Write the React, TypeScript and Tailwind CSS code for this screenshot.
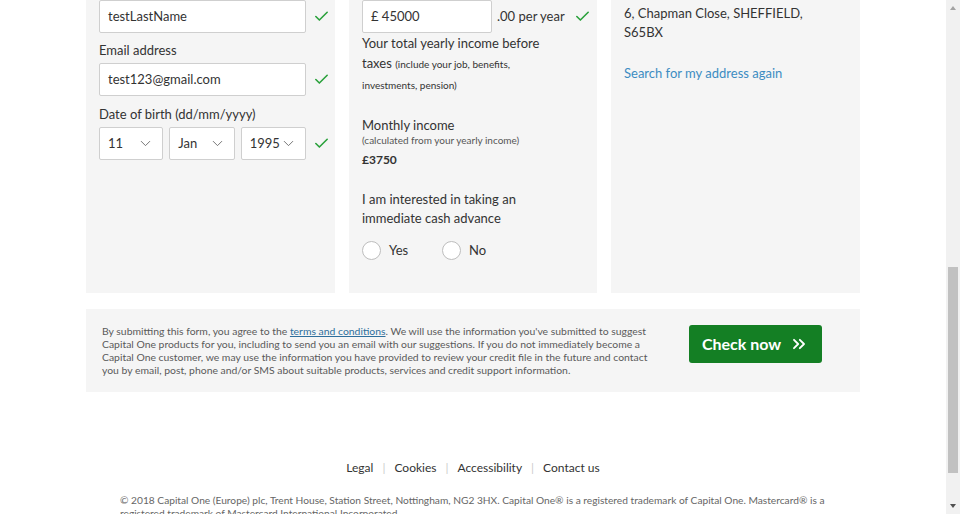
import { ChevronDown, ChevronsRight, Check } from "lucide-react";

const font = { fontFamily: "Lato, 'Open Sans', Arial, sans-serif" };

function Tick() {
  return <Check className="w-[17px] h-[17px] text-[#2aa13b] shrink-0" strokeWidth={2.25} />;
}

function TextBox({ value, className = "" }: { value: string; className?: string }) {
  return (
    <div
      className={`h-[33px] shrink-0 border border-[#cfcfcf] bg-white rounded-[2px] flex items-center px-2 text-[13px] text-[#333] ${className}`}
    >
      {value}
    </div>
  );
}

function SelectBox({ value, width }: { value: string; width: string }) {
  return (
    <div
      className={`${width} h-[33px] border border-[#cfcfcf] bg-white rounded-[2px] flex items-center justify-between pl-2 pr-2 text-[13px] text-[#333]`}
    >
      <span>{value}</span>
      <ChevronDown className="w-[17px] h-[17px] text-[#666]" strokeWidth={1.25} />
    </div>
  );
}

function Radio({ label, className = "" }: { label: string; className?: string }) {
  return (
    <div className={`flex items-center gap-2 ${className}`}>
      <span className="w-[19px] h-[19px] rounded-full border border-[#bdbdbd] bg-white" />
      <span className="text-[13px] text-[#333]">{label}</span>
    </div>
  );
}

export default function App() {
  return (
    <div className="w-[960px] h-[514px] overflow-hidden flex bg-white" style={font}>
      <main className="w-[946px] flex flex-col items-center">
        {/* Form panels */}
        <div className="w-[774px] shrink-0 grid grid-cols-[249px_248px_249px] gap-[14px]">
          {/* Personal details */}
          <section className="bg-[#f5f5f5] h-[293px] pl-[13px] pr-[8px]">
            <div className="flex items-center gap-[7px]">
              <TextBox value="testLastName" className="w-[207px]" />
              <Tick />
            </div>
            <div className="text-[13px] text-[#333] mt-[9px] leading-[16px]">Email address</div>
            <div className="flex items-center gap-[7px] mt-[5px]">
              <TextBox value="test123@gmail.com" className="w-[207px]" />
              <Tick />
            </div>
            <div className="text-[13px] text-[#333] mt-[10px] leading-[16px]">Date of birth (dd/mm/yyyy)</div>
            <div className="flex items-center gap-[7px] mt-[5px]">
              <div className="flex gap-[6px] w-[207px]">
                <SelectBox value="11" width="w-[65px]" />
                <SelectBox value="Jan" width="w-[66px]" />
                <SelectBox value="1995" width="w-[66px]" />
              </div>
              <Tick />
            </div>
          </section>

          {/* Income */}
          <section className="bg-[#f5f5f5] h-[293px] pl-[13px] pr-[4px] text-[#333]">
            <div className="flex items-center">
              <TextBox value="£ 45000" className="w-[130px]" />
              <span className="text-[13px] ml-[5px] whitespace-nowrap">.00 per year</span>
              <span className="ml-[9px]">
                <Tick />
              </span>
            </div>
            <p className="text-[13px] leading-[20px]">
              Your total yearly income before
              <br />
              taxes <span className="text-[10px]">(include your job, benefits,</span>
              <br />
              <span className="text-[10px]">investments, pension)</span>
            </p>
            <div className="mt-[22px] text-[13px] leading-[16px]">Monthly income</div>
            <div className="text-[10px] text-[#555] leading-[14px]">(calculated from your yearly income)</div>
            <div className="text-[12px] font-bold mt-[4px]">£3750</div>
            <p className="text-[13px] leading-[19px] mt-[21px]">
              I am interested in taking an
              <br />
              immediate cash advance
            </p>
            <div className="flex mt-[13px]">
              <Radio label="Yes" className="w-[80px]" />
              <Radio label="No" />
            </div>
          </section>

          {/* Address */}
          <section className="bg-[#f5f5f5] h-[293px] pl-[13px] pr-4 text-[13px] text-[#333]">
            <p className="leading-[19px] mt-[4px]">
              6, Chapman Close, SHEFFIELD,
              <br />
              S65BX
            </p>
            <a className="block mt-[22px] text-[#3c8cc2]">Search for my address again</a>
          </section>
        </div>

        {/* Submit */}
        <div className="w-[774px] shrink-0 mt-[16px] h-[83px] bg-[#f5f5f5] flex items-start justify-between pl-4 pr-[38px] pt-[16px]">
          <p className="text-[10.4px] leading-[13px] text-[#5a5a5a] whitespace-nowrap">
            By submitting this form, you agree to the{" "}
            <span className="text-[#2f6f9c] underline">terms and conditions</span>. We will use the information
            you've submitted to suggest
            <br />
            Capital One products for you, including to send you an email with our suggestions. If you do not
            immediately become a
            <br />
            Capital One customer, we may use the information you have provided to review your credit file in the
            future and contact
            <br />
            you by email, post, phone and/or SMS about suitable products, services and credit support information.
          </p>
          <button className="w-[133px] h-[38px] shrink-0 bg-[#147f24] rounded-[3px] text-white text-[16px] font-bold flex items-center justify-center gap-[8px]">
            Check now
            <ChevronsRight className="w-5 h-5" strokeWidth={2.25} />
          </button>
        </div>

        {/* Footer */}
        <nav className="mt-[68px] shrink-0 flex items-center text-[12px] text-[#333] leading-[16px]">
          <span>Legal</span>
          <span className="mx-[9px] text-[#ccc]">|</span>
          <span>Cookies</span>
          <span className="mx-[9px] text-[#ccc]">|</span>
          <span>Accessibility</span>
          <span className="mx-[9px] text-[#ccc]">|</span>
          <span>Contact us</span>
        </nav>
        <p className="mt-[18px] shrink-0 w-[706px] text-[10.2px] leading-[13px] text-[#666]">
          © 2018 Capital One (Europe) plc, Trent House, Station Street, Nottingham, NG2 3HX. Capital One® is a
          registered trademark of Capital One. Mastercard® is a registered trademark of Mastercard International
          Incorporated.
        </p>
      </main>

      {/* Scrollbar */}
      <div className="w-[14px] h-[514px] bg-[#f1f1f1] flex flex-col items-center">
        <div className="h-[16px] flex items-center justify-center">
          <span className="w-0 h-0 border-l-[3px] border-r-[3px] border-b-[4px] border-l-transparent border-r-transparent border-b-[#a3a3a3]" />
        </div>
        <div className="mt-[251px] w-[10px] h-[206px] bg-[#c1c1c1]" />
        <div className="mt-auto h-[16px] flex items-center justify-center">
          <span className="w-0 h-0 border-l-[3px] border-r-[3px] border-t-[4px] border-l-transparent border-r-transparent border-t-[#505050]" />
        </div>
      </div>
    </div>
  );
}
